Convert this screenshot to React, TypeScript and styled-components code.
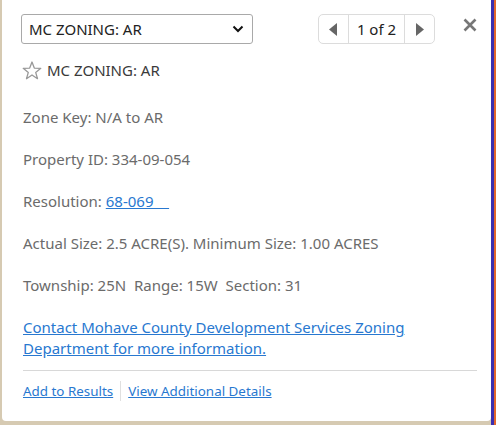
import React from "react";
import styled, { createGlobalStyle } from "styled-components";

const GlobalStyle = createGlobalStyle`
    html, body {
        margin: 0;
        padding: 0;
        height: 425px;
        overflow: hidden;
        background: linear-gradient(
            to right,
            #d6cab2 0px,
            #d6cab2 491px,
            #3a2fb0 491px,
            #3a2fb0 494px,
            #e0662c 494px
        );
        font-family: "Segoe UI", "Noto Sans", "Open Sans", sans-serif;
    }
`;

const Popup = styled.div`
    margin-left: 2px;
    width: 489px;
    height: 421px;
    box-sizing: border-box;
    background: #ffffff;
    border-radius: 0 0 4px 4px;
    padding: 14px 14px 0 19px;
    display: flex;
    flex-direction: column;
`;

const Header = styled.div`
    display: flex;
    align-items: flex-start;
`;

const Select = styled.div`
    width: 232px;
    height: 30px;
    box-sizing: border-box;
    border: 1px solid #a9a9a9;
    border-radius: 3px;
    display: flex;
    align-items: center;
    justify-content: space-between;
    padding: 0 8px 0 7px;
    font-size: 15px;
    color: #222;
`;

const Pager = styled.div`
    margin-left: 65px;
    display: flex;
    height: 30px;
    box-sizing: border-box;
    border: 1px solid #dcdcdc;
    border-radius: 5px;
`;

const PagerButton = styled.div`
    width: 29px;
    display: flex;
    align-items: center;
    justify-content: center;
`;

const PagerLabel = styled.div`
    width: 55px;
    border-left: 1px solid #dcdcdc;
    border-right: 1px solid #dcdcdc;
    display: flex;
    align-items: center;
    justify-content: center;
    font-size: 15px;
    color: #222;
`;

const Close = styled.div`
    margin-left: auto;
    margin-top: 1px;
`;

const TitleRow = styled.div`
    display: flex;
    align-items: center;
    gap: 5px;
    margin-top: 16px;
    padding-left: 1px;
    font-size: 15px;
    color: #3a3a3a;
`;

const Body = styled.div`
    margin-top: 27px;
    padding-left: 2px;
    padding-right: 10px;
`;

const Line = styled.p`
    margin: 0 0 21px 0;
    font-size: 15px;
    line-height: 21px;
    color: #6b6b6b;
`;

const Link = styled.a`
    color: #2878d0;
    text-decoration: underline;
    cursor: pointer;
`;

const Divider = styled.hr`
    border: none;
    border-top: 1px solid #d8d8d8;
    margin: -10px 0 0 2px;
`;

const Footer = styled.div`
    display: flex;
    align-items: center;
    padding: 10px 0 0 2px;
    font-size: 13.4px;
`;

const FooterSep = styled.span`
    width: 1px;
    height: 20px;
    background: #e0e0e0;
    margin: 0 7px;
`;

function App() {
    return (
        <>
            <GlobalStyle />
            <Popup>
                <Header>
                    <Select>
                        <span>MC ZONING: AR</span>
                        <svg width="12" height="8" viewBox="0 0 12 8">
                            <path d="M1.5 1.5 L6 6 L10.5 1.5" fill="none" stroke="#111" strokeWidth="2" />
                        </svg>
                    </Select>
                    <Pager>
                        <PagerButton>
                            <svg width="9" height="13" viewBox="0 0 9 13">
                                <path d="M8 0 L8 13 L0 6.5 Z" fill="#666" />
                            </svg>
                        </PagerButton>
                        <PagerLabel>1 of 2</PagerLabel>
                        <PagerButton>
                            <svg width="9" height="13" viewBox="0 0 9 13">
                                <path d="M1 0 L1 13 L9 6.5 Z" fill="#666" />
                            </svg>
                        </PagerButton>
                    </Pager>
                    <Close>
                        <svg width="14" height="14" viewBox="0 0 14 14">
                            <path d="M1.5 1.5 L12.5 12.5 M12.5 1.5 L1.5 12.5" stroke="#777" strokeWidth="2.6" />
                        </svg>
                    </Close>
                </Header>
                <TitleRow>
                    <svg width="20" height="19" viewBox="0 0 20 19">
                        <path
                            d="M10 1 L12.3 7.1 L18.8 7.3 L13.7 11.4 L15.5 17.7 L10 14 L4.5 17.7 L6.3 11.4 L1.2 7.3 L7.7 7.1 Z"
                            fill="none"
                            stroke="#999"
                            strokeWidth="1.3"
                            strokeLinejoin="round"
                        />
                    </svg>
                    <span>MC ZONING: AR</span>
                </TitleRow>
                <Body>
                    <Line>Zone Key: N/A to AR</Line>
                    <Line>Property ID: 334-09-054</Line>
                    <Line>
                        Resolution: <Link>68-069&nbsp;&nbsp;&nbsp;&nbsp;</Link>
                    </Line>
                    <Line>Actual Size: 2.5 ACRE(S). Minimum Size: 1.00 ACRES</Line>
                    <Line>Township: 25N&nbsp; Range: 15W&nbsp; Section: 31</Line>
                    <Line>
                        <Link>Contact Mohave County Development Services Zoning Department for more information.</Link>
                    </Line>
                </Body>
                <Divider />
                <Footer>
                    <Link>Add to Results</Link>
                    <FooterSep />
                    <Link>View Additional Details</Link>
                </Footer>
            </Popup>
        </>
    );
}

export default App;
